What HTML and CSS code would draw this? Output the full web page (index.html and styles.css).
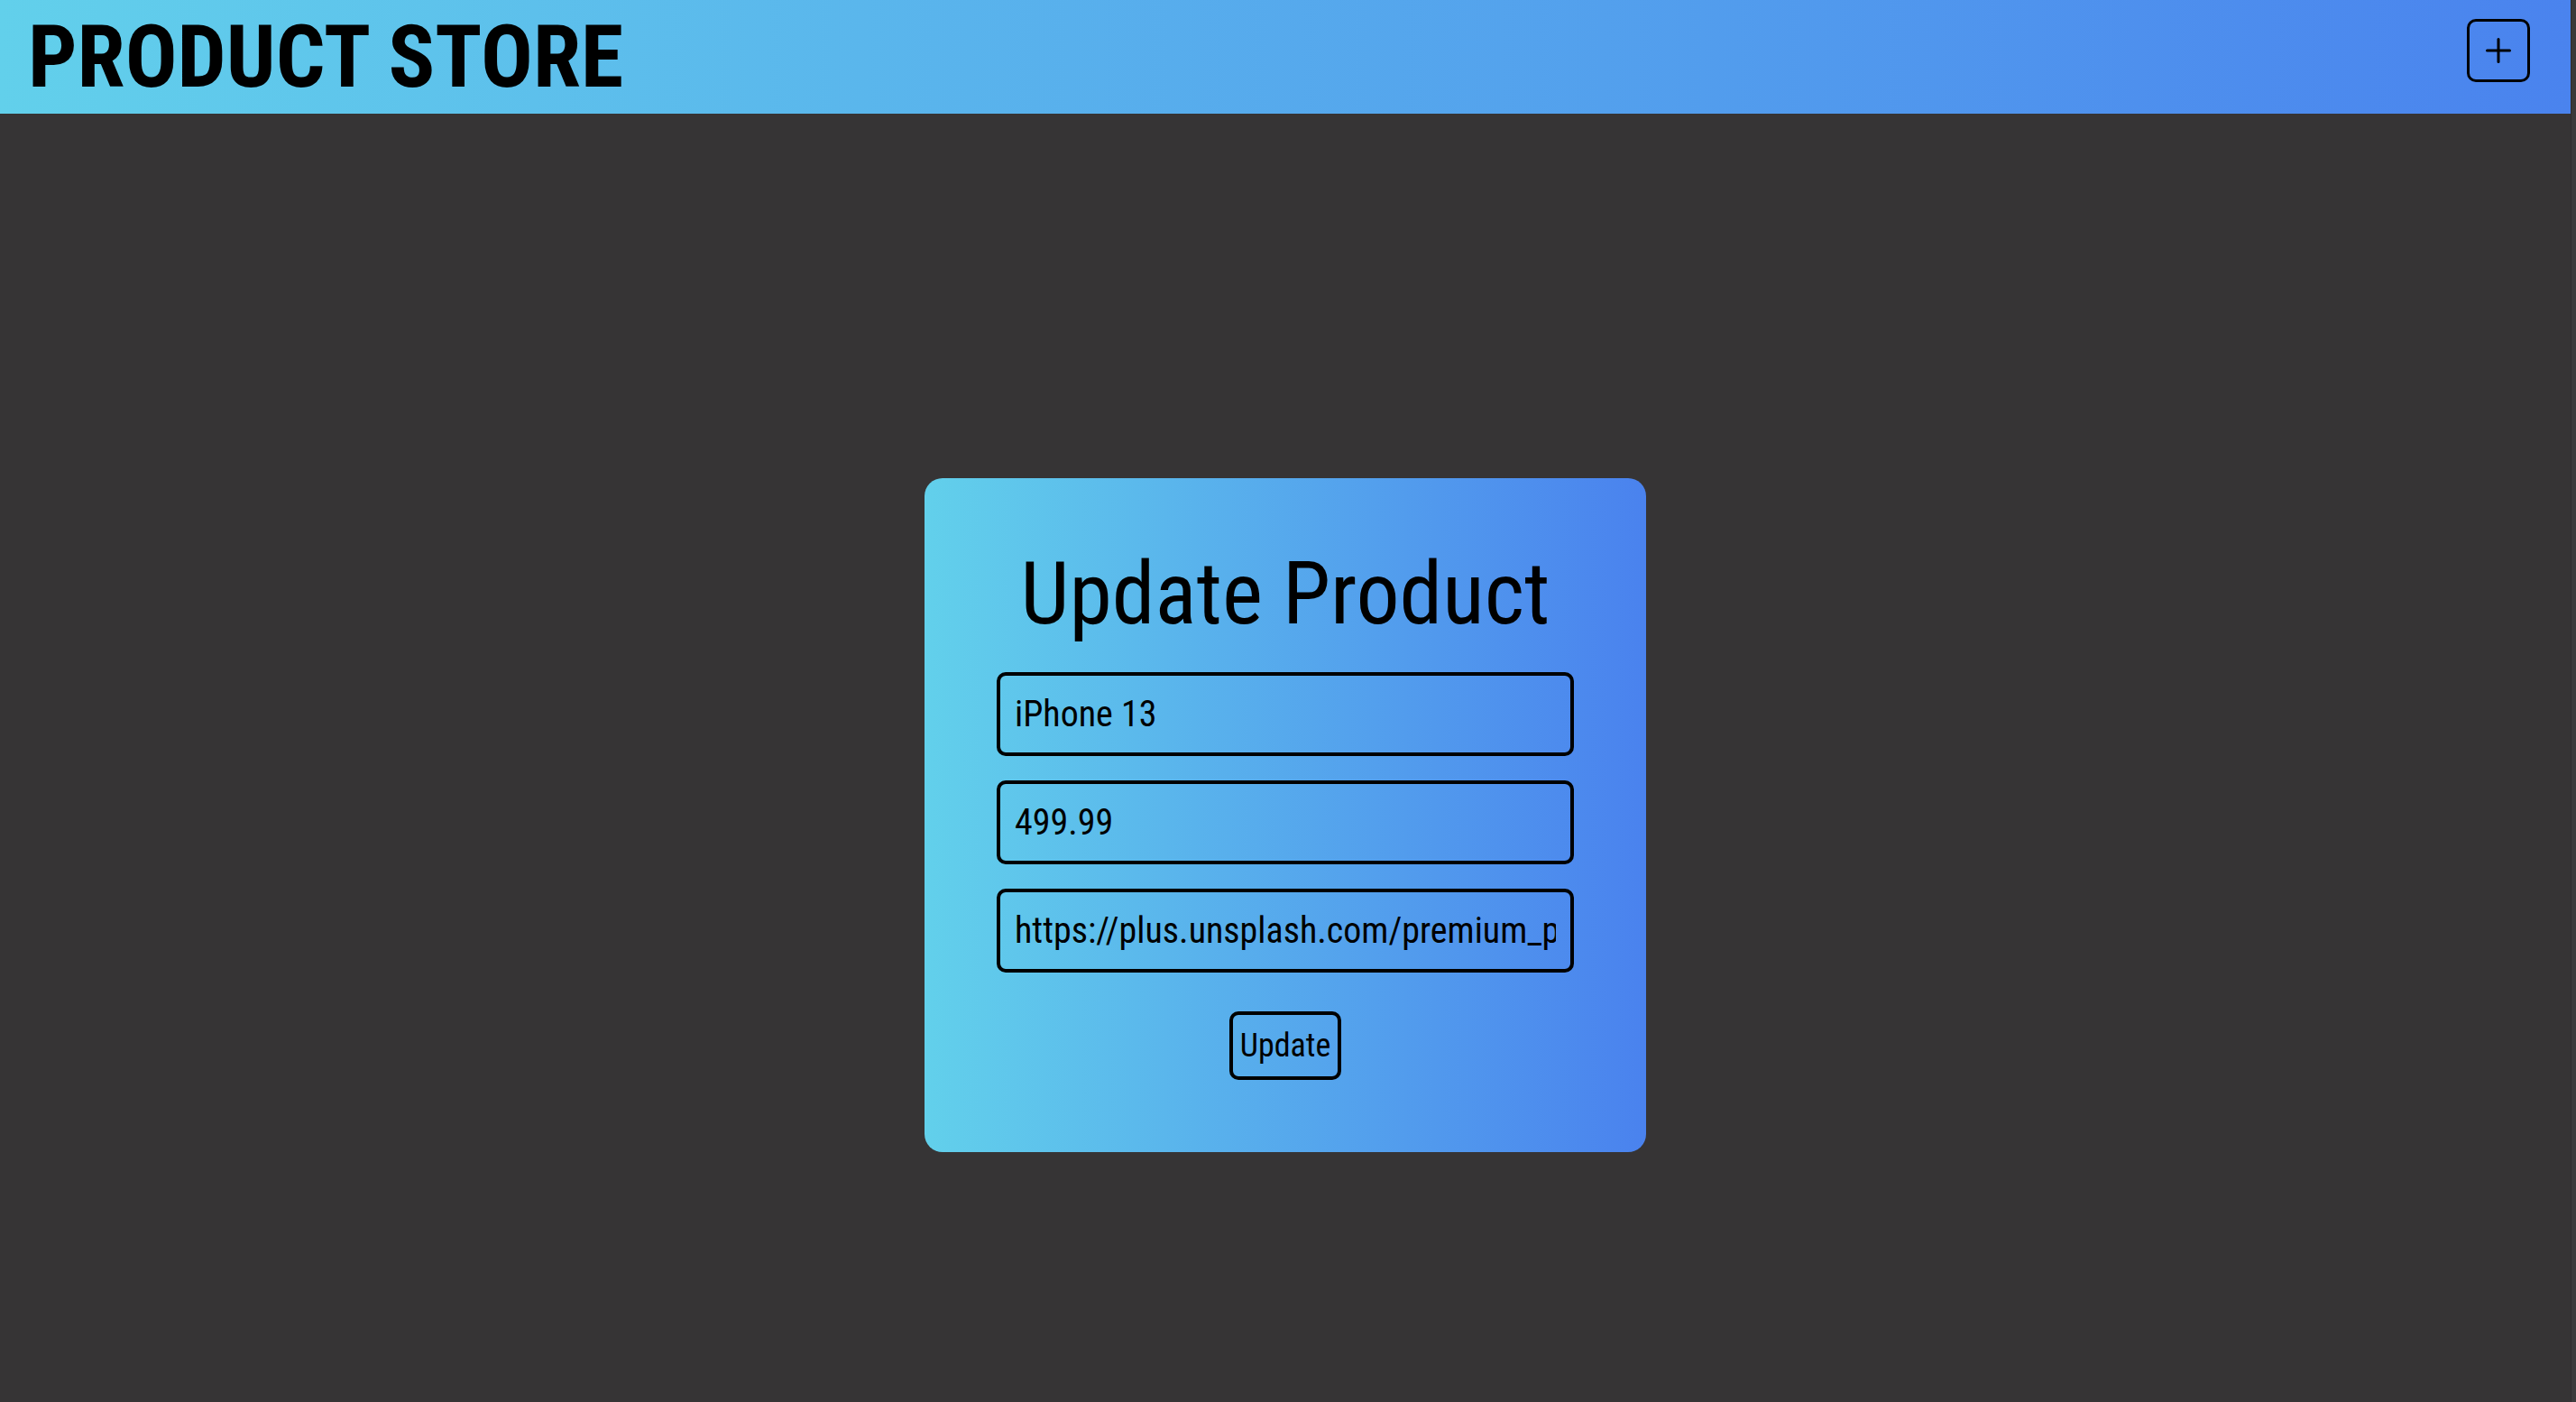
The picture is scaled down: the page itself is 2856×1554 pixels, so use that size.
FILE: index.html
```html
<!DOCTYPE html>
<html lang="en">
<head>
<meta charset="utf-8">
<title>Product Store</title>
<link rel="stylesheet" href="styles.css">
</head>
<body>
<div class="page">
  <header class="navbar">
    <h1 class="brand">PRODUCT STORE</h1>
    <button class="add-btn" type="button" aria-label="Add product">
      <svg width="28" height="28" viewBox="0 0 28 28" fill="none" stroke="#000" stroke-width="3" stroke-linecap="round">
        <line x1="1.5" y1="14" x2="26.5" y2="14"/>
        <line x1="14" y1="1.5" x2="14" y2="26.5"/>
      </svg>
    </button>
  </header>
  <main class="main">
    <form class="card">
      <h2 class="card-title">Update Product</h2>
      <div class="fields">
        <input class="field" type="text" value="iPhone 13">
        <input class="field" type="text" value="499.99">
        <input class="field" type="text" value="https://plus.unsplash.com/premium_photo-1680985551009-05107cd2752a?q=80&amp;w=1932&amp;auto=format&amp;fit=crop">
      </div>
      <button class="submit-btn" type="button">Update</button>
    </form>
  </main>
</div>
<div class="track"></div>
</body>
</html>
```
FILE: styles.css
```css
html, body {
  margin: 0;
  height: 100%;
}

body {
  display: flex;
  overflow: hidden;
  background: #363435;
  font-family: "Roboto Condensed", Roboto, "Liberation Sans", sans-serif;
  color: #000;
}

.page {
  flex: 1;
  min-width: 0;
  height: 100vh;
  overflow: hidden;
}

.track {
  width: 5px;
  flex: none;
  background: #3b3a3b;
  border-left: 1px solid #2d2c2d;
}

.navbar {
  height: 126px;
  box-sizing: border-box;
  display: flex;
  align-items: center;
  justify-content: space-between;
  padding: 0 45px 0 31px;
  background: linear-gradient(to right, #62d0eb, #4a83ee);
}

.brand {
  margin: 0;
  font-size: 96px;
  font-weight: 700;
  line-height: normal;
}

.add-btn {
  width: 70px;
  height: 70px;
  margin-bottom: 14px;
  box-sizing: border-box;
  border: 3px solid #000;
  border-radius: 10px;
  background: transparent;
  padding: 0;
  display: flex;
  align-items: center;
  justify-content: center;
}

.main {
  height: 100vh;
  display: flex;
  align-items: center;
  justify-content: center;
}

.card {
  width: 800px;
  box-sizing: border-box;
  padding: 72px 80px 80px;
  border-radius: 20px;
  background: linear-gradient(to right, #62d0eb, #4a82ee);
  display: flex;
  flex-direction: column;
  align-items: center;
}

.card-title {
  margin: 0 0 31px;
  font-size: 96px;
  font-weight: 400;
  line-height: normal;
}

.fields {
  width: 100%;
  display: flex;
  flex-direction: column;
  gap: 27px;
}

.field {
  width: 100%;
  box-sizing: border-box;
  padding: 19px 16px;
  border: 4px solid #000;
  border-radius: 10px;
  background: transparent;
  font-family: inherit;
  font-size: 40px;
  line-height: normal;
  color: #000;
  outline: none;
}

.submit-btn {
  margin-top: 43px;
  padding: 13px 8px;
  border: 4px solid #000;
  border-radius: 10px;
  background: transparent;
  font-family: inherit;
  font-size: 36px;
  line-height: normal;
  color: #000;
}
```
